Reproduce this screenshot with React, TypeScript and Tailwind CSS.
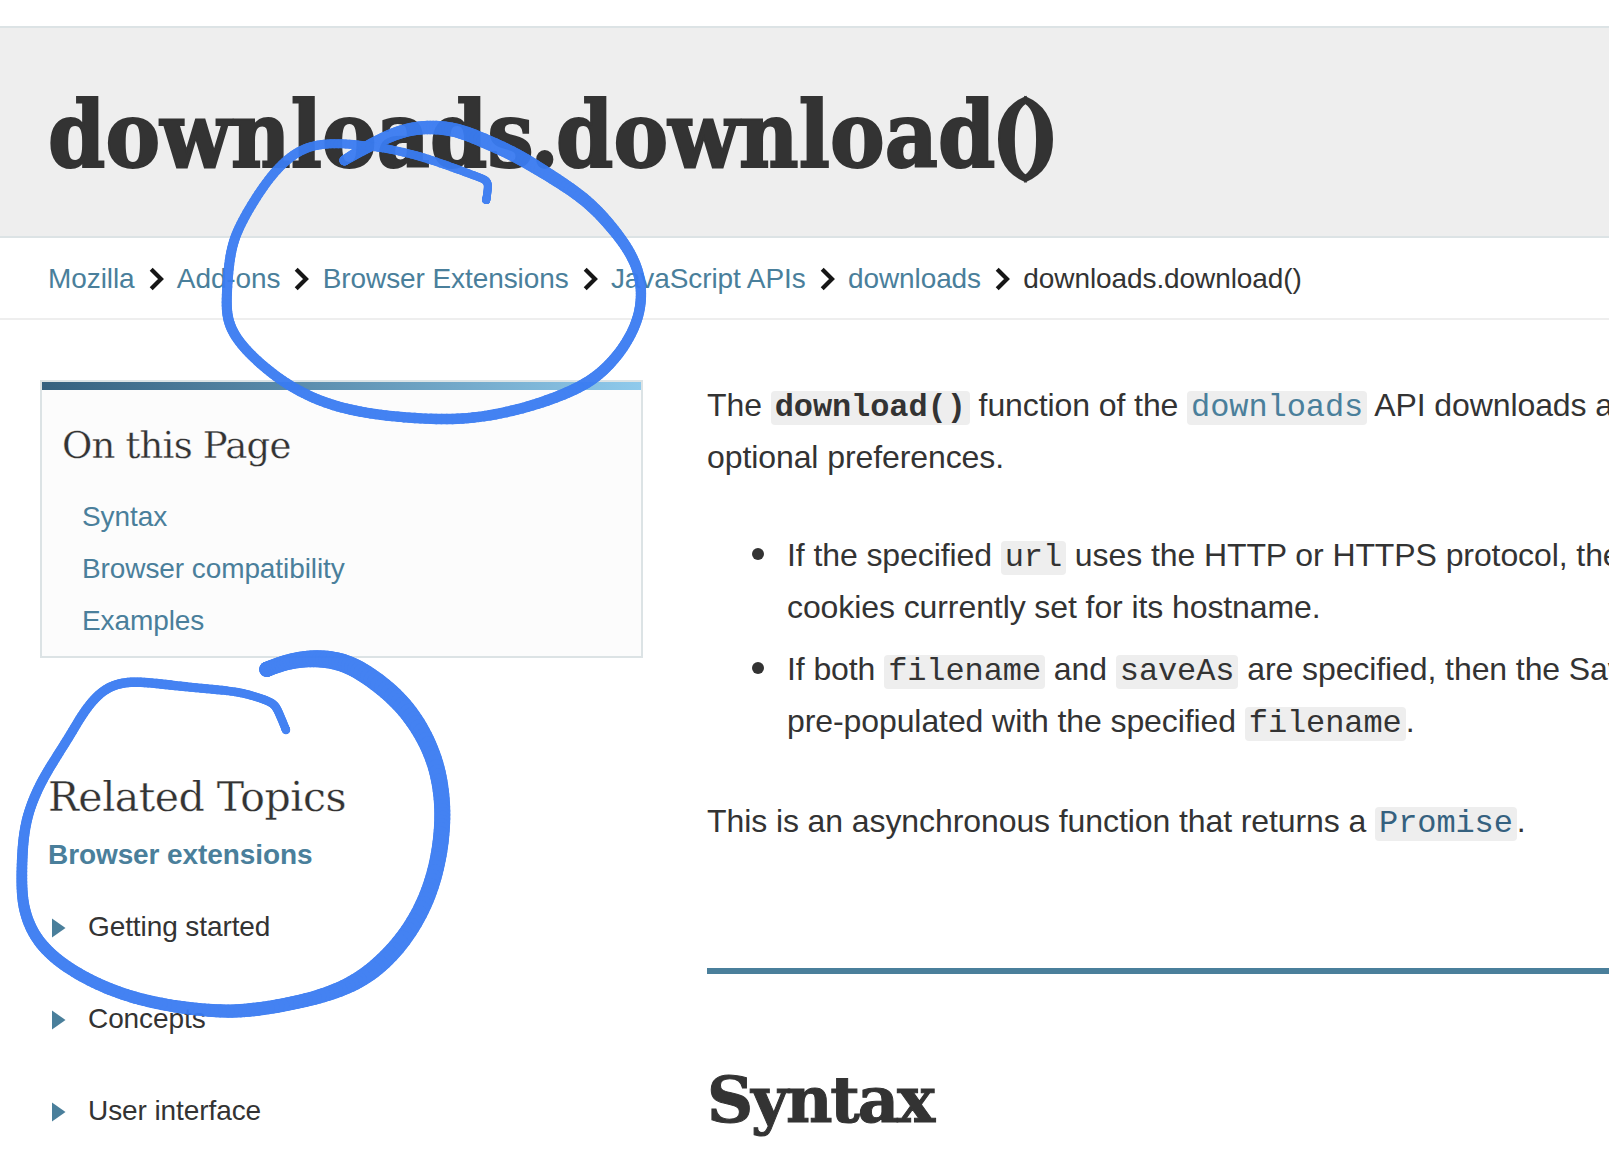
import type { ReactNode } from "react";

const crumbs = ["Mozilla", "Add-ons", "Browser Extensions", "JavaScript APIs", "downloads"];
const pageLinks = ["Syntax", "Browser compatibility", "Examples"];
const topics = ["Getting started", "Concepts", "User interface"];

// pen strokes: x, y, pen width
type Point = [number, number, number];

const topStroke: Point[] = [
  [344.3, 160.5, 10], [363, 149, 12], [387, 136.5, 13], [410, 128.5, 13], [433, 126.8, 13.5], [457, 129.5, 14],
  [483, 140, 14.5], [513, 153.5, 14.5], [533.5, 165.5, 14], [560, 182, 13], [587, 200.5, 12.5], [609, 223.5, 12],
  [629, 249.5, 11], [639.5, 273, 10.5], [642, 296.5, 10.3], [638, 321, 10.3], [624, 348, 10.5], [604, 371, 11],
  [583, 386, 11.3], [553, 399, 11], [513, 411.5, 10.5], [467, 419.5, 10.5], [427, 419.2, 10.5], [380, 415.5, 10.3],
  [340, 408, 10.3], [310, 397, 10.3], [283, 382, 10.3], [256.5, 361, 10.2], [236, 339, 10.2],
  [226.5, 318.5, 10.3], [226.5, 293.5, 10], [229.7, 253.5, 10], [237.5, 229, 9.8], [256, 197, 9.5],
  [276, 169, 9.5], [299, 149.5, 9.5], [323, 143, 9], [353, 144, 9], [387, 148.2, 8.5], [420, 156, 8.5],
  [453, 167.5, 8.5], [478, 177, 8], [488, 180.5, 8], [488, 189, 8], [486.2, 200, 8],
];

const bottomStroke: Point[] = [
  [266.7, 669.3, 15], [290, 660.5, 15.5], [317, 657.7, 17], [344, 661.5, 18], [369, 675.5, 19], [398, 698.5, 19],
  [420, 727, 18], [436.7, 763, 16.5], [442.7, 800, 16], [442.4, 830, 16], [438, 863, 16], [427, 900, 16.5],
  [407, 936, 17], [380, 966, 18], [352, 985, 16], [320, 997, 14], [283, 1005.5, 13.5], [243, 1011.5, 13.5],
  [213, 1011, 13], [180, 1007.5, 12.5], [143, 1000.5, 12], [110, 990, 12], [77, 974, 12], [50, 955, 12],
  [32, 933, 11.5], [23, 907, 11], [21.5, 883, 10.8], [22.2, 853, 10.5], [24.5, 829, 10.3], [30, 807, 10],
  [41, 782, 10], [55, 759, 9.5], [71, 734, 9.5], [85, 709.5, 9.5], [103, 689, 9.5], [124, 681.5, 9.5],
  [150, 682.4, 9.5], [190, 687.5, 9.3], [235, 691, 8.7], [254, 696, 8.5], [273, 702.5, 8.5],
  [277.5, 709, 8.5], [286, 730, 8.3],
];

// cubic B-spline over the points, so the width can change along the line
function smooth(points: Point[], steps = 8): Point[] {
  const first = points[0];
  const last = points[points.length - 1];
  const p = [first, first, ...points, last, last];
  const out: Point[] = [];
  for (let i = 0; i < p.length - 3; i++) {
    for (let s = 0; s < steps; s++) {
      const t = s / steps;
      const at = (k: number) =>
        ((1 - t) ** 3 * p[i][k] +
          (3 * t ** 3 - 6 * t ** 2 + 4) * p[i + 1][k] +
          (-3 * t ** 3 + 3 * t ** 2 + 3 * t + 1) * p[i + 2][k] +
          t ** 3 * p[i + 3][k]) /
        6;
      out.push([at(0), at(1), at(2)]);
    }
  }
  out.push(last);
  return out;
}

function PenStroke({ points }: { points: Point[] }) {
  const line = smooth(points);
  return (
    <g opacity="0.95" stroke="#3a7cf2" strokeLinecap="round">
      {line.slice(1).map(([x, y, w], i) => (
        <line key={i} x1={line[i][0]} y1={line[i][1]} x2={x} y2={y} strokeWidth={w} />
      ))}
    </g>
  );
}

function Chevron() {
  return (
    <svg width="16" height="24" viewBox="0 0 16 24" fill="none" className="ml-[14px] mr-[12.3px] shrink-0">
      <path d="M2.2 2.2 L12 12 L2.2 21.8" stroke="#161616" strokeWidth="4.2" />
    </svg>
  );
}

function Code({ children, className = "" }: { children: ReactNode; className?: string }) {
  return (
    <code
      className={`inline-block h-[34px] rounded-[4px] bg-[#eeeeee] px-1 font-['Liberation_Mono',monospace] text-[32px] leading-[34px] tracking-[-0.09px] ${className}`}
    >
      {children}
    </code>
  );
}

function Bullet() {
  return <span className="ml-[45px] mr-[23px] mt-[19px] size-3 shrink-0 rounded-full bg-[#333333]" />;
}

export default function App() {
  return (
    <div className="relative h-[1152px] w-[1609px] overflow-hidden bg-white pt-[26px] font-['Liberation_Sans',Arial,sans-serif] tracking-[-0.09px] text-[#333333]">
      <header className="flex h-[212px] items-center border-y-2 border-[#dce3e5] bg-[#eeeeee] pl-12 pt-[6px]">
        <h1 className="whitespace-nowrap font-['DejaVu_Serif_Condensed','DejaVu_Serif',serif] text-[91px] font-bold leading-none tracking-[0.2px] [-webkit-text-stroke:2px_#333333]">
          download<span className="tracking-[-3px]">s.</span>downloa<span className="tracking-[-4px]">d</span>
          <span className="tracking-[-9px]">()</span>
        </h1>
      </header>

      <nav className="flex h-[82px] items-center border-b-2 border-[#eeeeee] pl-12 pt-[2px] text-[28px] text-[#4a7f9b]">
        {crumbs.map((crumb) => (
          <div key={crumb} className="flex items-center">
            <a>{crumb}</a>
            <Chevron />
          </div>
        ))}
        <span className="text-[#333333]">downloads.download()</span>
      </nav>

      <div className="flex">
        <aside className="w-[643px] shrink-0 pl-10 pt-[60px]">
          <section className="h-[278px] border-2 border-[#dce3e5] bg-[#fcfcfc]">
            <div className="h-2 bg-linear-to-r from-[#35617f] to-[#8fcaec]" />
            <h2 className="ml-5 mt-[34px] whitespace-nowrap font-['DejaVu_Serif',serif] text-[37px] leading-[44px] tracking-[-0.8px] [-webkit-text-stroke:0.3px_#fcfcfc]">
              On this Page
            </h2>
            <ul className="ml-10 mt-[23px] text-[28px] leading-[52px] text-[#4a7f9b]">
              {pageLinks.map((link) => (
                <li key={link}>{link}</li>
              ))}
            </ul>
          </section>

          <section className="ml-2 mt-[113px]">
            <h2 className="whitespace-nowrap font-['DejaVu_Serif',serif] text-[41px] leading-[52px] tracking-[-0.5px] [-webkit-text-stroke:0.3px_#ffffff]">
              Related Topics
            </h2>
            <a className="mt-[6px] block text-[28px] font-bold leading-[52px] text-[#4a7f9b]">Browser extensions</a>
            <ul className="mt-5 text-[28px] leading-[52px]">
              {topics.map((topic) => (
                <li key={topic} className="mb-10 flex items-center">
                  <svg width="14" height="20" viewBox="0 0 14 20" className="ml-1 mr-[22px] mt-[1px]">
                    <path d="M0 0.5 L13.5 10 L0 19.5 Z" fill="#4a7f9b" />
                  </svg>
                  {topic}
                </li>
              ))}
            </ul>
          </section>
        </aside>

        <main className="ml-16 w-[902px] shrink-0 whitespace-nowrap pt-[59px] text-[32px] leading-[52px]">
          <p>
            The <Code className="font-bold">download()</Code> function of the{" "}
            <Code className="text-[#4a7f9b]">downloads</Code> API downloads a
            <br />
            optional preferences.
          </p>
          <ul className="mt-[46px]">
            <li className="flex items-start">
              <Bullet />
              <p>
                If the specified <Code>url</Code> uses the HTTP or HTTPS protocol, the
                <br />
                cookies currently set for its hostname.
              </p>
            </li>
            <li className="mt-[10px] flex items-start">
              <Bullet />
              <p>
                If both <Code>filename</Code> and <Code>saveAs</Code> are specified, then the Sav
                <br />
                pre-populated with the specified <Code>filename</Code>.
              </p>
            </li>
          </ul>
          <p className="mt-12">
            This is an asynchronous function that returns a <Code className="text-[#35617f]">Promise</Code>.
          </p>
          <h2 className="mt-[121px] border-t-6 border-[#4a7f9b] pt-[88px] font-['DejaVu_Serif',serif] text-[64px] font-bold leading-[76px] tracking-[-2.2px] [-webkit-text-stroke:1px_#333333]">
            Syntax
          </h2>
        </main>
      </div>

      <svg className="pointer-events-none absolute left-0 top-0" width="700" height="1152" viewBox="0 0 700 1152">
        <PenStroke points={topStroke} />
        <PenStroke points={bottomStroke} />
      </svg>
    </div>
  );
}
